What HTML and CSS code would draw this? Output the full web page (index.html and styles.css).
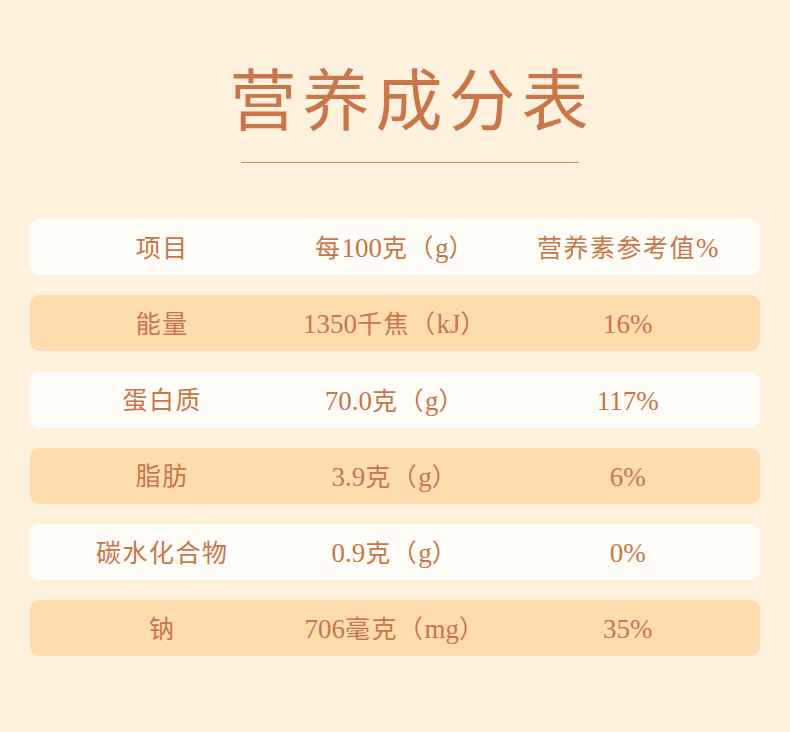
FILE: index.html
```html
<!DOCTYPE html>
<html lang="zh">
<head>
<meta charset="utf-8">
<title>营养成分表</title>
<link rel="stylesheet" href="styles.css">
</head>
<body>
<div class="page">
  <header class="head">
    <h1 class="title">营养成分表</h1>
    <div class="rule"></div>
  </header>
  <div class="table">
    <div class="row light"><span class="cell">项目</span><span class="cell">每<span class="n">100</span>克（<span class="n">g</span>）</span><span class="cell">营养素参考值<span class="n">%</span></span></div>
    <div class="row dark"><span class="cell">能量</span><span class="cell"><span class="n">1350</span>千焦（<span class="n">kJ</span>）</span><span class="cell"><span class="n">16%</span></span></div>
    <div class="row light"><span class="cell">蛋白质</span><span class="cell"><span class="n">70.0</span>克（<span class="n">g</span>）</span><span class="cell"><span class="n">117%</span></span></div>
    <div class="row dark"><span class="cell">脂肪</span><span class="cell"><span class="n">3.9</span>克（<span class="n">g</span>）</span><span class="cell"><span class="n">6%</span></span></div>
    <div class="row light"><span class="cell">碳水化合物</span><span class="cell"><span class="n">0.9</span>克（<span class="n">g</span>）</span><span class="cell"><span class="n">0%</span></span></div>
    <div class="row dark"><span class="cell">钠</span><span class="cell"><span class="n">706</span>毫克（<span class="n">mg</span>）</span><span class="cell"><span class="n">35%</span></span></div>
  </div>
</div>
</body>
</html>
```

FILE: styles.css
```css
html, body {
  margin: 0;
  padding: 0;
  background: #fef2df;
}
.page {
  width: 790px;
  height: 732px;
  box-sizing: border-box;
  padding: 56px 30px 0;
  font-family: "Liberation Serif", "Noto Sans CJK SC", serif;
  color: #c8764a;
}
.head {
  display: flex;
  flex-direction: column;
  align-items: center;
  padding-left: 30px;
}
.title {
  margin: 0;
  font-family: "Noto Sans CJK SC", sans-serif;
  font-weight: 400;
  font-size: 67px;
  line-height: 80px;
  letter-spacing: 6px;
  text-indent: 4px;
  color: #c8764a;
}
.rule {
  margin-top: 26px;
  width: 338px;
  height: 1px;
  background: #d08a5a;
}
.table {
  margin-top: 56px;
  display: flex;
  flex-direction: column;
  gap: 20.3px;
}
.row {
  box-sizing: border-box;
  height: 56px;
  border-radius: 9px;
  display: grid;
  grid-template-columns: 1fr 1fr 1fr;
  align-items: center;
  padding: 3px 16px 0;
  font-size: 25px;
  line-height: 30px;
  letter-spacing: 1.5px;
}
.cell {
  text-align: center;
}
.n {
  font-size: 27px;
  letter-spacing: 0;
}
.light { background: #fffdf7; }
.dark { background: #fedcae; }
```
